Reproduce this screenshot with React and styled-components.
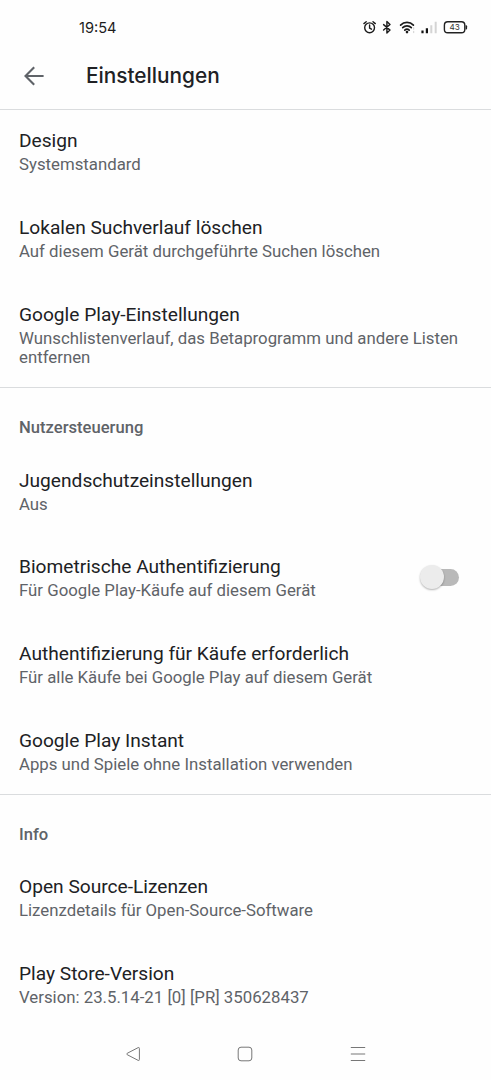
import styled, { createGlobalStyle } from "styled-components";

const GlobalStyle = createGlobalStyle`
  * {
    box-sizing: border-box;
  }
  body {
    margin: 0;
    background: #fefefe;
    font-family: Roboto, "Liberation Sans", sans-serif;
  }
  h1, h2, h3, p {
    margin: 0;
    font-weight: 400;
  }
`;

function StatusIcons() {
  return (
    <svg width="106" height="18" viewBox="362 18 106 18" fill="none">
      <g stroke="#1c1c1c" strokeWidth="1.4" strokeLinecap="round">
        <circle cx="369.6" cy="27.8" r="4.9" />
        <path d="M369.6 25v3.1l1.9 1.1M363.9 23.6l2.3-1.9M375.3 23.6l-2.3-1.9" />
        <path
          d="M383.6 24.6l6.4 5.5-3.1 3v-11.6l3.1 3-6.4 5.5"
          strokeWidth="1.4"
          strokeLinejoin="round"
        />
        <path d="M400.6 25.1a9 9 0 0 1 12.8 0M402.7 27.7a6 6 0 0 1 8.6 0M404.8 30.1a3.2 3.2 0 0 1 4.4 0" strokeWidth="1.7" />
      </g>
      <circle cx="407" cy="32.1" r="1.3" fill="#1c1c1c" />
      <path d="M413.7 27.3v2.4M413.7 30.9v2.2" stroke="#d0d0d0" />
      <path d="M421.4 30.4h2.2v2.9h-2.2zM425.8 28.3h2.2v5h-2.2z" fill="#111" />
      <path d="M430.3 25.2h2v8.1h-2zM434.7 21.7h2v11.6h-2z" fill="#d4d4d4" />
      <rect x="444.4" y="21.8" width="20.4" height="11" rx="3.4" stroke="#222" strokeWidth="1.4" />
      <path d="M465.6 25.2h.5a1 1 0 0 1 1 1v2.4a1 1 0 0 1-1 1h-.5z" fill="#222" />
      <text x="454.6" y="30.3" fill="#333" fontSize="8.2" fontFamily="Inter" textAnchor="middle">
        43
      </text>
    </svg>
  );
}

function Setting({ title, text, children }) {
  return (
    <Row>
      <RowText>
        <RowTitle>{title}</RowTitle>
        <Description>{text}</Description>
      </RowText>
      {children}
    </Row>
  );
}

export default function App() {
  return (
    <Page>
      <GlobalStyle />
      <StatusBar>
        <Clock>19:54</Clock>
        <StatusIcons />
      </StatusBar>
      <Header>
        <BackButton aria-label="Zurück">
          <svg width="20" height="20" viewBox="0 0 20 20" fill="none">
            <path d="M19.6 10H1.6M10.2 1.2L1.5 10l8.7 8.8" stroke="#5f6368" strokeWidth="2.1" />
          </svg>
        </BackButton>
        <PageTitle>Einstellungen</PageTitle>
      </Header>

      <Section>
        <Setting title="Design" text="Systemstandard" />
        <Setting
          title="Lokalen Suchverlauf löschen"
          text="Auf diesem Gerät durchgeführte Suchen löschen"
        />
        <Setting
          title="Google Play-Einstellungen"
          text="Wunschlistenverlauf, das Betaprogramm und andere Listen entfernen"
        />
      </Section>

      <Section>
        <SectionTitle>Nutzersteuerung</SectionTitle>
        <Setting title="Jugendschutzeinstellungen" text="Aus" />
        <Setting
          title="Biometrische Authentifizierung"
          text="Für Google Play-Käufe auf diesem Gerät"
        >
          <Switch role="switch" aria-checked="false">
            <Thumb />
          </Switch>
        </Setting>
        <Setting
          title="Authentifizierung für Käufe erforderlich"
          text="Für alle Käufe bei Google Play auf diesem Gerät"
        />
        <Setting
          title="Google Play Instant"
          text="Apps und Spiele ohne Installation verwenden"
        />
      </Section>

      <Section>
        <SectionTitle>Info</SectionTitle>
        <Setting
          title="Open Source-Lizenzen"
          text="Lizenzdetails für Open-Source-Software"
        />
        <Setting
          title="Play Store-Version"
          text="Version: 23.5.14-21 [0] [PR] 350628437"
        />
      </Section>

      <NavigationBar>
        <svg width="16" height="16" viewBox="0 0 16 16" fill="none" stroke="#777">
          <path d="M13.2 1.6L2.2 7.3q-1 .7 0 1.4l11 5.7q1.2.4 1.2-.8V2.4q0-1.2-1.2-.8z" />
        </svg>
        <svg width="16" height="16" viewBox="0 0 16 16" fill="none" stroke="#777">
          <rect x="1.2" y="1.2" width="13.6" height="13.6" rx="2.8" />
        </svg>
        <svg width="16" height="16" viewBox="0 0 16 16" fill="none" stroke="#777">
          <path d="M.8 1.5h14.4M.8 8h14.4M.8 14.5h14.4" />
        </svg>
      </NavigationBar>
    </Page>
  );
}

const Page = styled.main`
  width: 100%;
  height: 1080px;
  display: flex;
  flex-direction: column;
  overflow: hidden;

  > * {
    flex-shrink: 0;
  }
`;

const StatusBar = styled.div`
  height: 42px;
  padding: 18px 23px 0 79px;
  display: flex;
  justify-content: space-between;
  align-items: flex-start;
`;

const Clock = styled.span`
  font-family: Inter, Roboto, sans-serif;
  font-size: 14.6px;
  line-height: 20px;
  color: #1c1c1c;
`;

const Header = styled.header`
  height: 68px;
  padding: 1px 0 0 23.5px;
  display: flex;
  align-items: center;
  gap: 42.5px;
  border-bottom: 1px solid #dadcde;
`;

const BackButton = styled.button`
  display: flex;
  padding: 0;
  border: none;
  background: none;
`;

const PageTitle = styled.h1`
  font-family: Inter, Roboto, sans-serif;
  font-size: 20.8px;
  line-height: 26px;
  font-weight: 500;
  color: #202124;
`;

const Section = styled.section`
  padding: 20.2px 19px 19.6px;

  & + & {
    border-top: 1px solid #dadcde;
    padding-top: 29.2px;
  }

  &:last-of-type {
    padding-bottom: 0;
  }
`;

const SectionTitle = styled.h2`
  margin-bottom: 31.4px;
  font-size: 16.6px;
  line-height: 21px;
  font-weight: 500;
  color: #5f6368;
`;

const Row = styled.div`
  display: flex;
  justify-content: space-between;
  align-items: center;

  & + & {
    margin-top: 42.2px;
  }
`;

const RowText = styled.div`
  display: flex;
  flex-direction: column;
  gap: 2.5px;
`;

const RowTitle = styled.h3`
  font-size: 19.15px;
  line-height: 22.5px;
  color: #202124;
`;

const Description = styled.p`
  font-size: 16.8px;
  line-height: 19.5px;
  color: #5f6368;
`;

const Switch = styled.div`
  width: 39px;
  height: 17px;
  margin: 0 13px 3px 0;
  border-radius: 9px;
  background: linear-gradient(90deg, transparent 12px, #b9b9b9 12px);
  display: flex;
  align-items: center;
`;

const Thumb = styled.span`
  width: 24px;
  height: 24px;
  flex: none;
  border-radius: 50%;
  background: #ececec;
  box-shadow: 0 1px 2px rgba(0, 0, 0, 0.3);
`;

const NavigationBar = styled.nav`
  margin-top: auto;
  height: 54px;
  padding: 1px 125.5px 0 124.5px;
  display: flex;
  justify-content: space-between;
  align-items: center;
`;
